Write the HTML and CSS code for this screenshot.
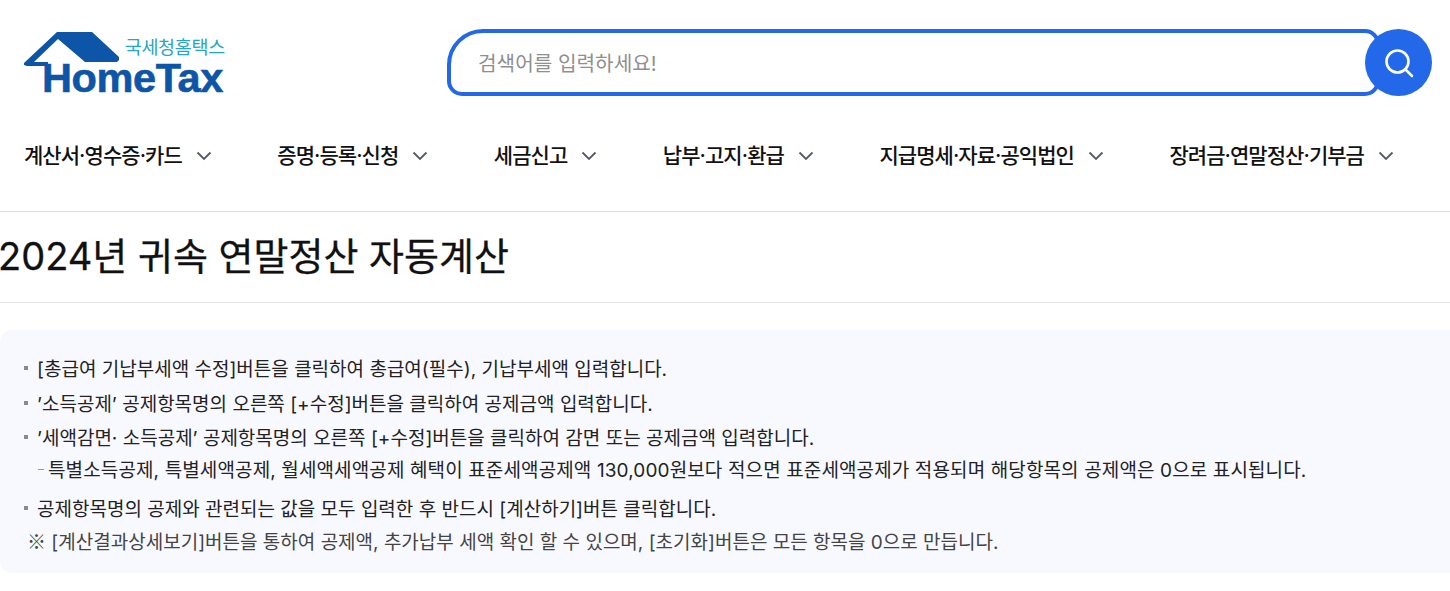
FILE: index.html
```html
<!DOCTYPE html>
<html lang="ko">
<head>
<meta charset="utf-8">
<title>2024년 귀속 연말정산 자동계산</title>
<link rel="stylesheet" href="styles.css">
</head>
<body>
<header class="top">
  <a class="logo" href="#">
    <svg class="logo-house" width="134" height="47" viewBox="24 29 134 47"><path fill="#0d55a6" d="M24 63 57 32H92L119 57V60L117 62H85L58 39 34 62H48V66H27L24 65Z"/></svg>
    <span class="logo-ko">국세청홈택스</span>
    <span class="logo-en">HomeTax</span>
  </a>
  <form class="search">
    <div class="search-box"><span class="search-ph">검색어를 입력하세요!</span></div>
    <button class="search-btn" type="button" aria-label="검색">
      <svg width="30" height="30" viewBox="0 0 30 30" fill="none" stroke="#fff" stroke-width="2.600"><circle cx="13.500" cy="13.500" r="11"/><path d="M21.500 21.500 28 28" stroke-linecap="round"/></svg>
    </button>
  </form>
</header>
<nav class="gnb">
  <a class="gnb-item">계산서·영수증·카드<svg class="chev" width="16" height="10" viewBox="0 0 16 10"><path d="M1.500 1.500 8 8l6.500-6.500"/></svg></a>
  <a class="gnb-item">증명·등록·신청<svg class="chev" width="16" height="10" viewBox="0 0 16 10"><path d="M1.500 1.500 8 8l6.500-6.500"/></svg></a>
  <a class="gnb-item">세금신고<svg class="chev" width="16" height="10" viewBox="0 0 16 10"><path d="M1.500 1.500 8 8l6.500-6.500"/></svg></a>
  <a class="gnb-item">납부·고지·환급<svg class="chev" width="16" height="10" viewBox="0 0 16 10"><path d="M1.500 1.500 8 8l6.500-6.500"/></svg></a>
  <a class="gnb-item">지급명세·자료·공익법인<svg class="chev" width="16" height="10" viewBox="0 0 16 10"><path d="M1.500 1.500 8 8l6.500-6.500"/></svg></a>
  <a class="gnb-item">장려금·연말정산·기부금<svg class="chev" width="16" height="10" viewBox="0 0 16 10"><path d="M1.500 1.500 8 8l6.500-6.500"/></svg></a>
</nav>
<div class="title-bar"><h1>2024년 귀속 연말정산 자동계산</h1></div>
<section class="info">
  <ul class="info-list">
    <li>[총급여 기납부세액 수정]버튼을 클릭하여 총급여(필수), 기납부세액 입력합니다.</li>
    <li>’소득공제’ 공제항목명의 오른쪽 [+수정]버튼을 클릭하여 공제금액 입력합니다.</li>
    <li>’세액감면· 소득공제’ 공제항목명의 오른쪽 [+수정]버튼을 클릭하여 감면 또는 공제금액 입력합니다.
      <p class="sub">특별소득공제, 특별세액공제, 월세액세액공제 혜택이 표준세액공제액 130,000원보다 적으면 표준세액공제가 적용되며 해당항목의 공제액은 0으로 표시됩니다.</p>
    </li>
    <li>공제항목명의 공제와 관련되는 값을 모두 입력한 후 반드시 [계산하기]버튼 클릭합니다.</li>
  </ul>
  <p class="note"><span class="note-mark">※</span> [계산결과상세보기]버튼을 통하여 공제액, 추가납부 세액 확인 할 수 있으며, [초기화]버튼은 모든 항목을 0으로 만듭니다.</p>
</section>
</body>
</html>
```
FILE: styles.css
```css
* { box-sizing: border-box; }
html, body { margin: 0; padding: 0; background: #fff; overflow: hidden; }
body { font-family: Inter, "Noto Sans CJK KR", sans-serif; color: #111; height: 591px; }

.top { display: flex; align-items: flex-start; height: 120px; padding: 29px 18px 0 24px; }
.logo { position: relative; display: block; width: 201px; height: 66px; margin-right: 222px; color: #0d55a6; }
.logo-house { position: absolute; left: 0; top: 0; }
.logo-ko { position: absolute; right: 0; top: 8px; font-family: "Noto Sans CJK KR", sans-serif; font-size: 18.500px; line-height: 18px; letter-spacing: -0.3px; color: #26a5c4; white-space: nowrap; }
.logo-en { position: absolute; left: 18px; top: 34px; font-family: "Liberation Sans", sans-serif; font-weight: 700; font-size: 41.500px; line-height: 30px; letter-spacing: -0.4px; color: #0d55a6; white-space: nowrap; -webkit-text-stroke: 0.6px #0d55a6; }

.search { flex: 1; display: flex; position: relative; height: 67px; }
.search-box { flex: 1; margin-right: 52px; border: 4px solid #2368e8; border-radius: 36px 15px 15px 15px; display: flex; align-items: center; padding-left: 27px; background: #fff; }
.search-ph { font-size: 20.200px; color: #8f8f8f; }
.search-btn { position: absolute; right: 0; top: 0; width: 67px; height: 67px; padding: 0; border: 0; border-radius: 50%; background: #2368e8; display: flex; align-items: center; justify-content: center; }

.gnb { display: flex; justify-content: space-between; height: 92px; padding: 0 56px 0 24px; border-bottom: 1px solid #ddd; }
.gnb-item { display: flex; align-items: center; height: 68px; font-size: 21px; font-weight: 500; letter-spacing: -0.95px; color: #111; white-space: nowrap; }
.chev { margin-left: 14px; margin-top: 3px; fill: none; stroke: #555a66; stroke-width: 1.800; }

.title-bar { height: 91px; border-bottom: 1px solid #e2e2e2; display: flex; align-items: center; }
h1 { margin: 0 0 2px -2px; font-size: 38px; font-weight: 400; color: #111; line-height: 50px; -webkit-text-stroke: 0.3px #111; }

.info { margin: 27px -20px 0 0; height: 243px; padding: 23px 0 0 24px; background: #f8f9ff; border-radius: 12px; font-size: 19px; color: #222; }
.info-list { list-style: none; margin: 0; padding: 0; }
.info-list li { position: relative; padding-left: 13px; line-height: 34.500px; white-space: nowrap; }
.info-list li::before { content: ""; position: absolute; left: 0; top: 13px; width: 4px; height: 4px; background: #8a8a8a; }
.sub { margin: -2px 0 6px; position: relative; padding-left: 11px; line-height: 32px; letter-spacing: 0.120px; }
.sub::before { content: ""; position: absolute; left: 1px; top: 14px; width: 6px; height: 1px; background: #999; }
.note { margin: -2px 0 0 3px; line-height: 32px; color: #444; white-space: nowrap; }
.note-mark { font-family: "Noto Sans CJK KR", sans-serif; }
```
